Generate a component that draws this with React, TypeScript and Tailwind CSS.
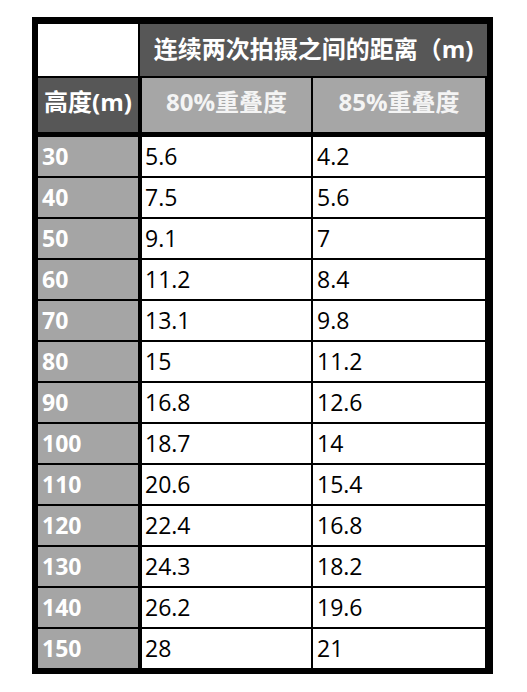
const rows: [string, string, string][] = [
  ["30", "5.6", "4.2"],
  ["40", "7.5", "5.6"],
  ["50", "9.1", "7"],
  ["60", "11.2", "8.4"],
  ["70", "13.1", "9.8"],
  ["80", "15", "11.2"],
  ["90", "16.8", "12.6"],
  ["100", "18.7", "14"],
  ["110", "20.6", "15.4"],
  ["120", "22.4", "16.8"],
  ["130", "24.3", "18.2"],
  ["140", "26.2", "19.6"],
  ["150", "28", "21"],
];

const font = "font-['Open_Sans','Noto_Sans_CJK_SC',sans-serif]";

export default function App() {
  return (
    <div className={`min-h-[692px] w-[527px] bg-white pl-[32px] pt-[17px] ${font}`}>
      <div className="flex w-[461px] flex-col bg-black p-[6px] pt-[7px]">
        {/* header rows */}
        <div className="grid h-[52px] grid-cols-[100px_347px] gap-x-[2px]">
          <div className="bg-white" />
          <div className="flex items-center justify-center bg-[#575757] pb-[3px] text-[24px] font-bold text-white">
            连续两次拍摄之间的距离（m)
          </div>
        </div>
        <div className="mt-[2px] grid h-[54px] grid-cols-[100px_171px_172px] gap-x-[2px]">
          <div className="flex items-center justify-center bg-[#575757] pb-[6px] text-[24px] font-bold text-white">
            高度(m)
          </div>
          <div className="ml-[2px] flex items-center justify-center bg-[#a6a6a6] pb-[6px] text-[24px] font-bold text-[#f4f4f4]">
            80%重叠度
          </div>
          <div className="flex items-center justify-center bg-[#a6a6a6] pb-[6px] text-[24px] font-bold text-[#f4f4f4]">
            85%重叠度
          </div>
        </div>

        {/* data rows */}
        <div className="mt-[5px] flex flex-col gap-y-[2px]">
          {rows.map(([h, a, b]) => (
            <div key={h} className="grid h-[39px] grid-cols-[100px_171px_172px] gap-x-[2px]">
              <div className="flex items-center bg-[#a5a5a5] pl-[4px] text-[23px] font-bold text-white">
                {h}
              </div>
              <div className="ml-[2px] flex items-center bg-white pl-[3px] text-[23px] text-black">
                {a}
              </div>
              <div className="flex items-center bg-white pl-[4px] text-[23px] text-black">{b}</div>
            </div>
          ))}
        </div>
      </div>
    </div>
  );
}
